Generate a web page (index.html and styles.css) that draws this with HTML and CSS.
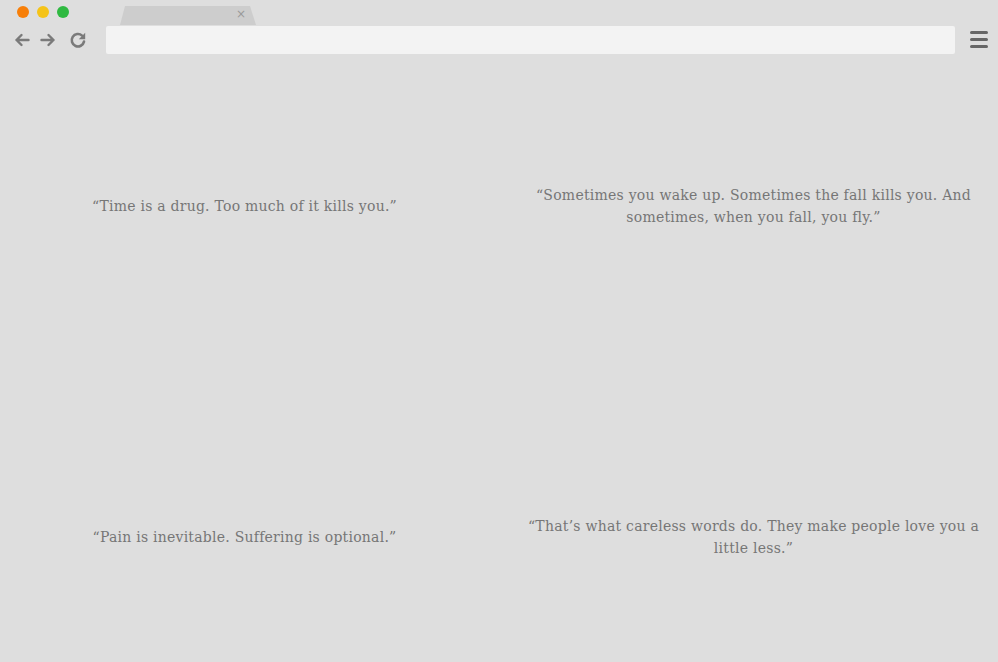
FILE: index.html
```html
<!DOCTYPE html>
<html>
<head>
<meta charset="utf-8">
<link rel="stylesheet" href="styles.css">
</head>
<body>
<header class="chrome">
  <div class="top-row">
    <div class="lights">
      <span class="light orange"></span>
      <span class="light yellow"></span>
      <span class="light green"></span>
    </div>
    <div class="tab"><span class="tab-close">×</span></div>
  </div>
  <div class="nav-row">
    <div class="nav-icons">
      <svg class="nav-icon" width="18" height="18" viewBox="0 0 18 18"><path d="M15.5 9H3.5M8.5 4L3.5 9l5 5" fill="none" stroke="#7a7a7a" stroke-width="2.4" stroke-linecap="round" stroke-linejoin="round"/></svg>
      <svg class="nav-icon" width="18" height="18" viewBox="0 0 18 18"><path d="M2.5 9h12M9.5 4l5 5-5 5" fill="none" stroke="#7a7a7a" stroke-width="2.4" stroke-linecap="round" stroke-linejoin="round"/></svg>
      <svg class="nav-icon reload" width="18" height="18" viewBox="0 0 18 18"><path d="M15 10.6A6.2 6.2 0 1 1 13.1 4.6" fill="none" stroke="#7a7a7a" stroke-width="2.6" stroke-linecap="round"/><path d="M16.2 1.8v6.4H9.8z" fill="#7a7a7a"/></svg>
    </div>
    <div class="address"></div>
    <div class="menu">
      <span class="bar"></span><span class="bar"></span><span class="bar"></span>
    </div>
  </div>
</header>
<main class="quotes">
  <div class="cell"><p class="quote">“Time is a drug. Too much of it kills you.”</p></div>
  <div class="cell"><p class="quote">“Sometimes you wake up. Sometimes the fall kills you. And sometimes, when you fall, you fly.”</p></div>
  <div class="cell"><p class="quote">“Pain is inevitable. Suffering is optional.”</p></div>
  <div class="cell"><p class="quote">“That’s what careless words do. They make people love you a little less.”</p></div>
</main>
</body>
</html>
```
FILE: styles.css
```css
html, body {
  margin: 0;
  padding: 0;
  background: #dedede;
  height: 100%;
  overflow: hidden;
}
.chrome {
  display: flex;
  flex-direction: column;
}
.top-row {
  display: flex;
  align-items: flex-start;
  height: 25px;
}
.lights {
  display: flex;
  gap: 8px;
  padding: 6px 0 0 17px;
}
.light {
  width: 12px;
  height: 12px;
  border-radius: 50%;
  display: block;
}
.orange { background: #f77f08; }
.yellow { background: #f5c318; }
.green { background: #2fb941; }
.tab {
  margin: 6px 0 0 51px;
  width: 136px;
  height: 19px;
  background: #cdcdcd;
  clip-path: polygon(5px 0, 130px 0, 136px 100%, 0 100%);
  position: relative;
}
.tab-close {
  position: absolute;
  left: 116px;
  top: 1px;
  font: 12px "DejaVu Sans", sans-serif;
  color: #9a9a9a;
}
.nav-row {
  display: flex;
  align-items: center;
  height: 29px;
}
.nav-icons {
  display: flex;
  align-items: center;
  width: 106px;
  padding-left: 13px;
  box-sizing: border-box;
  gap: 8px;
}
.nav-icon.reload { margin-left: 4px; }
.address {
  width: 849px;
  height: 28px;
  background: #f3f3f3;
  border-radius: 2px;
}
.menu {
  margin-left: 15px;
  display: flex;
  flex-direction: column;
  gap: 4px;
}
.bar {
  width: 18px;
  height: 3px;
  background: #666;
  border-radius: 1.5px;
  display: block;
}
.quotes {
  display: grid;
  grid-template-columns: 489px 489px;
  column-gap: 20px;
  grid-template-rows: 220px 220px;
  row-gap: 111px;
  padding-top: 42px;
}
.cell {
  display: flex;
  align-items: center;
  justify-content: center;
  padding: 0 14px;
}
.quote {
  margin: 0;
  text-align: center;
  font-family: "DejaVu Serif", serif;
  font-size: 14px;
  line-height: 22px;
  letter-spacing: 0.24px;
  color: #767676;
}
```
